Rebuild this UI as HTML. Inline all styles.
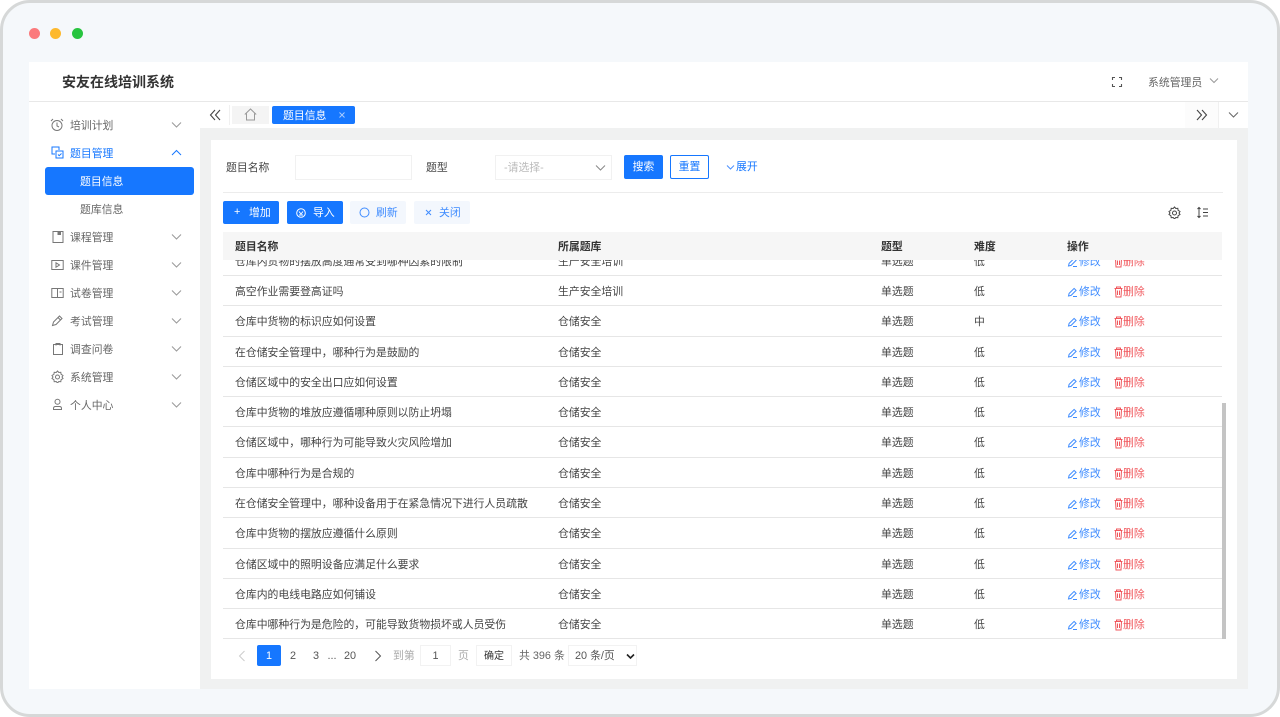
<!DOCTYPE html>
<html lang="zh"><head><meta charset="utf-8"><style>
html,body{margin:0;padding:0;width:1280px;height:717px;overflow:hidden;background:#fff}
body{font-family:"Liberation Sans","Noto Sans CJK SC",sans-serif;font-size:10.85px;color:#444;position:relative}
div,span,svg{position:absolute;box-sizing:border-box;white-space:nowrap}
#frame{left:0;top:0;width:1280px;height:717px;border:3px solid #d6d8d8;border-radius:30px;background:#f5f8fb}
.t{line-height:14px;height:14px}
.i{fill:none;stroke:#777;stroke-width:1}
.mt{left:70px;color:#666;margin-top:1px}
.r{left:223px;width:999px;border-bottom:1px solid #e6e6e6}
.r span{top:9px;line-height:14px}
.r svg{left:844px;top:9px;fill:none;stroke-width:1}
.c1{left:12px}.c2{left:335px}.c3{left:658px}.c4{left:751px}
.c5{left:856px;color:#3f8cff}.c6{left:900px;color:#f0575c}
.e{stroke:#3f8cff}.d{stroke:#f0575c}
.btn{height:23px;top:201px;border-radius:2px;text-align:center;line-height:23px}
.pg{top:645px;height:21px;line-height:22px;text-align:center;color:#555}
</style></head><body>
<div id="frame"></div>
<div style="left:29px;top:28px;width:11px;height:11px;border-radius:50%;background:#fb7a7c"></div>
<div style="left:50px;top:28px;width:11px;height:11px;border-radius:50%;background:#fdb92e"></div>
<div style="left:72px;top:28px;width:11px;height:11px;border-radius:50%;background:#27c43f"></div>

<div style="left:29px;top:62px;width:1219px;height:627px;background:#fff"></div>
<div style="left:29px;top:101px;width:1219px;height:1px;background:#e8e8e8"></div>
<div class="t" style="left:62px;top:74px;font-size:14px;line-height:17px;height:17px;font-weight:700;color:#333">安友在线培训系统</div>
<svg style="left:1111px;top:76px" width="12" height="12" viewBox="0 0 12 12"><path d="M1.500 4V1.500H4M8 1.500h2.500V4M10.500 8v2.500H8M4 10.500H1.500V8" fill="none" stroke="#555" stroke-width="1.100"/></svg>
<div class="t" style="left:1148px;top:76px;color:#666">系统管理员</div>
<svg style="left:1209px;top:77px" width="10" height="8" viewBox="0 0 10 8"><path d="M1 1.500l4 4 4-4" fill="none" stroke="#999"/></svg>

<!-- content bg -->
<div style="left:200px;top:102px;width:1048px;height:587px;background:#f0f1f1"></div>
<div style="left:200px;top:102px;width:1048px;height:26px;background:#fff"></div>
<div style="left:229px;top:105px;width:1px;height:20px;background:#f0f0f0"></div>
<svg style="left:209px;top:109px" width="12" height="12" viewBox="0 0 12 12"><path d="M6 1L1.500 6 6 11M11 1L6.500 6 11 11" fill="none" stroke="#444" stroke-width="1.100"/></svg>
<div style="left:232px;top:106px;width:37px;height:18px;background:#f4f4f4"></div>
<svg style="left:244px;top:108px" width="13" height="13" viewBox="0 0 13 13"><path d="M.8 6.500L6.500 1l5.700 5.500M2.500 5.500v6.500h8V5.500" fill="none" stroke="#999"/></svg>
<div style="left:272px;top:106px;width:83px;height:18px;background:#1677ff;border-radius:2px"></div>
<div class="t" style="left:283px;top:109px;color:#fff">题目信息</div>
<svg style="left:339px;top:112px" width="6" height="6" viewBox="0 0 6 6"><path d="M.5.5l5 5M5.500.5l-5 5" stroke="#a8ccff"/></svg>
<div style="left:1185px;top:102px;width:33px;height:26px;background:#fcfcfc"></div>
<div style="left:1218px;top:102px;width:1px;height:26px;background:#f0f0f0"></div>
<svg style="left:1196px;top:109px" width="12" height="12" viewBox="0 0 12 12"><path d="M1 1l4.500 5L1 11M6 1l4.500 5L6 11" fill="none" stroke="#444" stroke-width="1.100"/></svg>
<svg style="left:1228px;top:111px" width="11" height="8" viewBox="0 0 11 8"><path d="M1 1.500l4.500 4.500L10 1.500" fill="none" stroke="#666"/></svg>

<!-- sidebar -->
<svg class="i" style="left:50px;top:118px" width="14" height="14" viewBox="0 0 14 14"><circle cx="7" cy="7.500" r="5"/><path d="M7 4.500V8l2 1M1 3l2-2M13 3l-2-2"/></svg>
<div class="t mt" style="top:118px">培训计划</div>
<svg class="i" style="left:51px;top:146px;stroke:#1677ff" width="13" height="13" viewBox="0 0 13 13"><path d="M4 8H1V1h7v3"/><rect x="5" y="5" width="7" height="7"/><path d="M7 8.500l1.200 1.200L10.500 7.500"/></svg>
<div class="t mt" style="top:146px;color:#1677ff">题目管理</div>
<div style="left:45px;top:167px;width:149px;height:28px;background:#1677ff;border-radius:3px"></div>
<div class="t" style="left:80px;top:175px;color:#fff">题目信息</div>
<div class="t" style="left:80px;top:203px;color:#666">题库信息</div>
<svg class="i" style="left:52px;top:230px" width="12" height="14" viewBox="0 0 12 14"><rect x="1" y="1.500" width="10" height="11"/><path d="M6 2h2.500v2.500H6z" fill="#777"/></svg>
<div class="t mt" style="top:230px">课程管理</div>
<svg class="i" style="left:51px;top:259px" width="13" height="12" viewBox="0 0 13 12"><rect x=".8" y="1.500" width="11.400" height="9"/><path d="M5 3.800v4.400l3.500-2.200z"/></svg>
<div class="t mt" style="top:258px">课件管理</div>
<svg class="i" style="left:51px;top:287px" width="13" height="12" viewBox="0 0 13 12"><rect x=".8" y="1.500" width="11.400" height="9"/><path d="M6.500 1.500v9M8.500 5h2"/></svg>
<div class="t mt" style="top:286px">试卷管理</div>
<svg class="i" style="left:51px;top:314px" width="13" height="13" viewBox="0 0 13 13"><path d="M1.500 11.500l1-3.500 6-6 2.500 2.500-6 6zM7 3.500l2.500 2.500"/></svg>
<div class="t mt" style="top:314px">考试管理</div>
<svg class="i" style="left:52px;top:342px" width="12" height="14" viewBox="0 0 12 14"><rect x="1.500" y="2.500" width="9" height="10"/><path d="M4 3.500V1.500h4v2"/></svg>
<div class="t mt" style="top:342px">调查问卷</div>
<svg class="i" style="left:51px;top:370px" width="13" height="13" viewBox="0 0 13 13"><path d="M6.500 1l1.300 1.500 2-.2.300 2L12 5.500 11 7l1 1.500-1.900 1.200-.3 2-2-.2-1.300 1.500-1.300-1.500-2 .2-.3-2L1 8.500 2 7 1 5.500l1.900-1.200.3-2 2 .2z"/><circle cx="6.500" cy="7" r="2"/></svg>
<div class="t mt" style="top:370px">系统管理</div>
<svg class="i" style="left:51px;top:398px" width="13" height="13" viewBox="0 0 13 13"><circle cx="6.500" cy="3.800" r="2.500"/><path d="M2.500 11.500V10.500Q2.500 8.500 4.500 8.500H8.500Q10.500 8.500 10.500 10.500V11.500z"/></svg>
<div class="t mt" style="top:398px">个人中心</div>
<svg style="left:171px;top:121px" width="11" height="8" viewBox="0 0 11 8"><path d="M1 1.500l4.500 4.500L10 1.500" fill="none" stroke="#999"/></svg>
<svg style="left:171px;top:149px" width="11" height="8" viewBox="0 0 11 8"><path d="M1 6l4.500-4.500L10 6" fill="none" stroke="#1677ff"/></svg>
<svg style="left:171px;top:233px" width="11" height="8" viewBox="0 0 11 8"><path d="M1 1.500l4.500 4.500L10 1.500" fill="none" stroke="#999"/></svg>
<svg style="left:171px;top:261px" width="11" height="8" viewBox="0 0 11 8"><path d="M1 1.500l4.500 4.500L10 1.500" fill="none" stroke="#999"/></svg>
<svg style="left:171px;top:289px" width="11" height="8" viewBox="0 0 11 8"><path d="M1 1.500l4.500 4.500L10 1.500" fill="none" stroke="#999"/></svg>
<svg style="left:171px;top:317px" width="11" height="8" viewBox="0 0 11 8"><path d="M1 1.500l4.500 4.500L10 1.500" fill="none" stroke="#999"/></svg>
<svg style="left:171px;top:345px" width="11" height="8" viewBox="0 0 11 8"><path d="M1 1.500l4.500 4.500L10 1.500" fill="none" stroke="#999"/></svg>
<svg style="left:171px;top:373px" width="11" height="8" viewBox="0 0 11 8"><path d="M1 1.500l4.500 4.500L10 1.500" fill="none" stroke="#999"/></svg>
<svg style="left:171px;top:401px" width="11" height="8" viewBox="0 0 11 8"><path d="M1 1.500l4.500 4.500L10 1.500" fill="none" stroke="#999"/></svg>

<!-- card -->
<div style="left:211px;top:140px;width:1026px;height:539px;background:#fff"></div>
<div class="t" style="left:226px;top:161px">题目名称</div>
<div style="left:295px;top:155px;width:117px;height:25px;border:1px solid #f1f1f1"></div>
<div class="t" style="left:426px;top:161px">题型</div>
<div style="left:495px;top:155px;width:117px;height:25px;border:1px solid #f1f1f1"></div>
<div class="t" style="left:504px;top:161px;color:#bbb">-请选择-</div>
<svg style="left:595px;top:164px" width="11" height="8" viewBox="0 0 11 8"><path d="M1 1.500l4.500 4.500L10 1.500" fill="none" stroke="#888"/></svg>
<div style="left:624px;top:155px;width:39px;height:24px;background:#1677ff;border-radius:2px;color:#fff;text-align:center;line-height:25px">搜索</div>
<div style="left:670px;top:155px;width:39px;height:24px;border:1px solid #1677ff;border-radius:2px;color:#1677ff;text-align:center;line-height:23px">重置</div>
<svg style="left:726px;top:164px" width="9" height="7" viewBox="0 0 9 7"><path d="M1 1.500l3.500 3.500L8 1.500" fill="none" stroke="#4a90ff"/></svg>
<div class="t" style="left:736px;top:160px;color:#1677ff">展开</div>
<div style="left:223px;top:192px;width:1000px;height:1px;background:#ececec"></div>

<div class="btn" style="left:223px;width:56px;background:#1677ff"></div>
<div class="t" style="left:234px;top:205px;color:#fff">+</div>
<div class="t" style="left:249px;top:206px;color:#fff">增加</div>
<div class="btn" style="left:287px;width:56px;background:#1677ff"></div>
<svg style="left:296px;top:208px" width="10" height="10" viewBox="0 0 10 10"><circle cx="5" cy="5" r="4.300" fill="none" stroke="#fff"/><path d="M3 3.500l2 2.500 2-2.500M3 7h4" fill="none" stroke="#fff"/></svg>
<div class="t" style="left:313px;top:206px;color:#fff">导入</div>
<div class="btn" style="left:350px;width:56px;background:#f3f7fd"></div>
<svg style="left:359px;top:207px" width="11" height="11" viewBox="0 0 11 11"><circle cx="5.500" cy="5.500" r="4.500" fill="none" stroke="#3f8cff"/></svg>
<div class="t" style="left:376px;top:206px;color:#3f8cff">刷新</div>
<div class="btn" style="left:414px;width:56px;background:#f3f7fd"></div>
<svg style="left:425px;top:209px" width="7" height="7" viewBox="0 0 7 7"><path d="M1 1l5 5M6 1L1 6" stroke="#3f8cff"/></svg>
<div class="t" style="left:439px;top:206px;color:#3f8cff">关闭</div>
<svg class="i" style="left:1168px;top:206px;stroke:#444" width="13" height="13" viewBox="0 0 13 13"><path d="M6.500 1l1.300 1.500 2-.2.300 2L12 5.500 11 7l1 1.500-1.900 1.200-.3 2-2-.2-1.300 1.500-1.300-1.500-2 .2-.3-2L1 8.500 2 7 1 5.500l1.900-1.200.3-2 2 .2z"/><circle cx="6.500" cy="7" r="2"/></svg>
<svg class="i" style="left:1196px;top:206px;stroke:#444" width="13" height="13" viewBox="0 0 13 13"><path d="M3 1.500v10M1.500 3L3 1.500 4.500 3M1.500 10L3 11.500 4.500 10M7 3h5M7 6.500h5M7 10h5"/></svg>

<!-- table rows -->
<div class="r" style="top:245px;height:31px"><span class="c1" style="top:10px">仓库内货物的摆放高度通常受到哪种因素的限制</span><span class="c2" style="top:10px">生产安全培训</span><span class="c3" style="top:10px">单选题</span><span class="c4" style="top:10px">低</span><span class="c5" style="top:10px">修改</span><span class="c6" style="top:10px">删除</span><svg style="top:10px" width="60" height="14" viewBox="0 0 60 14"><path class="e" d="M1.500 11l.6-2.600 5-5 2 2-5 5zM6 11.500h4"/><path class="d" d="M47.500 3.500h8M49.500 3.500V2h4v1.500M48.500 3.500l.5 8.500h5l.5-8.500M50.500 5.500v4.500M52.500 5.500v4.500"/></svg></div>
<div class="r" style="top:276px;height:30px"><span class="c1">高空作业需要登高证吗</span><span class="c2">生产安全培训</span><span class="c3">单选题</span><span class="c4">低</span><span class="c5">修改</span><span class="c6">删除</span><svg width="60" height="14" viewBox="0 0 60 14"><path class="e" d="M1.500 11l.6-2.600 5-5 2 2-5 5zM6 11.500h4"/><path class="d" d="M47.500 3.500h8M49.500 3.500V2h4v1.500M48.500 3.500l.5 8.500h5l.5-8.500M50.500 5.500v4.500M52.500 5.500v4.500"/></svg></div>
<div class="r" style="top:306px;height:31px"><span class="c1">仓库中货物的标识应如何设置</span><span class="c2">仓储安全</span><span class="c3">单选题</span><span class="c4">中</span><span class="c5">修改</span><span class="c6">删除</span><svg width="60" height="14" viewBox="0 0 60 14"><path class="e" d="M1.500 11l.6-2.600 5-5 2 2-5 5zM6 11.500h4"/><path class="d" d="M47.500 3.500h8M49.500 3.500V2h4v1.500M48.500 3.500l.5 8.500h5l.5-8.500M50.500 5.500v4.500M52.500 5.500v4.500"/></svg></div>
<div class="r" style="top:337px;height:30px"><span class="c1">在仓储安全管理中，哪种行为是鼓励的</span><span class="c2">仓储安全</span><span class="c3">单选题</span><span class="c4">低</span><span class="c5">修改</span><span class="c6">删除</span><svg width="60" height="14" viewBox="0 0 60 14"><path class="e" d="M1.500 11l.6-2.600 5-5 2 2-5 5zM6 11.500h4"/><path class="d" d="M47.500 3.500h8M49.500 3.500V2h4v1.500M48.500 3.500l.5 8.500h5l.5-8.500M50.500 5.500v4.500M52.500 5.500v4.500"/></svg></div>
<div class="r" style="top:367px;height:30px"><span class="c1">仓储区域中的安全出口应如何设置</span><span class="c2">仓储安全</span><span class="c3">单选题</span><span class="c4">低</span><span class="c5">修改</span><span class="c6">删除</span><svg width="60" height="14" viewBox="0 0 60 14"><path class="e" d="M1.500 11l.6-2.600 5-5 2 2-5 5zM6 11.500h4"/><path class="d" d="M47.500 3.500h8M49.500 3.500V2h4v1.500M48.500 3.500l.5 8.500h5l.5-8.500M50.500 5.500v4.500M52.500 5.500v4.500"/></svg></div>
<div class="r" style="top:397px;height:30px"><span class="c1">仓库中货物的堆放应遵循哪种原则以防止坍塌</span><span class="c2">仓储安全</span><span class="c3">单选题</span><span class="c4">低</span><span class="c5">修改</span><span class="c6">删除</span><svg width="60" height="14" viewBox="0 0 60 14"><path class="e" d="M1.500 11l.6-2.600 5-5 2 2-5 5zM6 11.500h4"/><path class="d" d="M47.500 3.500h8M49.500 3.500V2h4v1.500M48.500 3.500l.5 8.500h5l.5-8.500M50.500 5.500v4.500M52.500 5.500v4.500"/></svg></div>
<div class="r" style="top:427px;height:31px"><span class="c1">仓储区域中，哪种行为可能导致火灾风险增加</span><span class="c2">仓储安全</span><span class="c3">单选题</span><span class="c4">低</span><span class="c5">修改</span><span class="c6">删除</span><svg width="60" height="14" viewBox="0 0 60 14"><path class="e" d="M1.500 11l.6-2.600 5-5 2 2-5 5zM6 11.500h4"/><path class="d" d="M47.500 3.500h8M49.500 3.500V2h4v1.500M48.500 3.500l.5 8.500h5l.5-8.500M50.500 5.500v4.500M52.500 5.500v4.500"/></svg></div>
<div class="r" style="top:458px;height:30px"><span class="c1">仓库中哪种行为是合规的</span><span class="c2">仓储安全</span><span class="c3">单选题</span><span class="c4">低</span><span class="c5">修改</span><span class="c6">删除</span><svg width="60" height="14" viewBox="0 0 60 14"><path class="e" d="M1.500 11l.6-2.600 5-5 2 2-5 5zM6 11.500h4"/><path class="d" d="M47.500 3.500h8M49.500 3.500V2h4v1.500M48.500 3.500l.5 8.500h5l.5-8.500M50.500 5.500v4.500M52.500 5.500v4.500"/></svg></div>
<div class="r" style="top:488px;height:30px"><span class="c1">在仓储安全管理中，哪种设备用于在紧急情况下进行人员疏散</span><span class="c2">仓储安全</span><span class="c3">单选题</span><span class="c4">低</span><span class="c5">修改</span><span class="c6">删除</span><svg width="60" height="14" viewBox="0 0 60 14"><path class="e" d="M1.500 11l.6-2.600 5-5 2 2-5 5zM6 11.500h4"/><path class="d" d="M47.500 3.500h8M49.500 3.500V2h4v1.500M48.500 3.500l.5 8.500h5l.5-8.500M50.500 5.500v4.500M52.500 5.500v4.500"/></svg></div>
<div class="r" style="top:518px;height:31px"><span class="c1">仓库中货物的摆放应遵循什么原则</span><span class="c2">仓储安全</span><span class="c3">单选题</span><span class="c4">低</span><span class="c5">修改</span><span class="c6">删除</span><svg width="60" height="14" viewBox="0 0 60 14"><path class="e" d="M1.500 11l.6-2.600 5-5 2 2-5 5zM6 11.500h4"/><path class="d" d="M47.500 3.500h8M49.500 3.500V2h4v1.500M48.500 3.500l.5 8.500h5l.5-8.500M50.500 5.500v4.500M52.500 5.500v4.500"/></svg></div>
<div class="r" style="top:549px;height:30px"><span class="c1">仓储区域中的照明设备应满足什么要求</span><span class="c2">仓储安全</span><span class="c3">单选题</span><span class="c4">低</span><span class="c5">修改</span><span class="c6">删除</span><svg width="60" height="14" viewBox="0 0 60 14"><path class="e" d="M1.500 11l.6-2.600 5-5 2 2-5 5zM6 11.500h4"/><path class="d" d="M47.500 3.500h8M49.500 3.500V2h4v1.500M48.500 3.500l.5 8.500h5l.5-8.500M50.500 5.500v4.500M52.500 5.500v4.500"/></svg></div>
<div class="r" style="top:579px;height:30px"><span class="c1">仓库内的电线电路应如何铺设</span><span class="c2">仓储安全</span><span class="c3">单选题</span><span class="c4">低</span><span class="c5">修改</span><span class="c6">删除</span><svg width="60" height="14" viewBox="0 0 60 14"><path class="e" d="M1.500 11l.6-2.600 5-5 2 2-5 5zM6 11.500h4"/><path class="d" d="M47.500 3.500h8M49.500 3.500V2h4v1.500M48.500 3.500l.5 8.500h5l.5-8.500M50.500 5.500v4.500M52.500 5.500v4.500"/></svg></div>
<div class="r" style="top:609px;height:30px"><span class="c1">仓库中哪种行为是危险的，可能导致货物损坏或人员受伤</span><span class="c2">仓储安全</span><span class="c3">单选题</span><span class="c4">低</span><span class="c5">修改</span><span class="c6">删除</span><svg width="60" height="14" viewBox="0 0 60 14"><path class="e" d="M1.500 11l.6-2.600 5-5 2 2-5 5zM6 11.500h4"/><path class="d" d="M47.500 3.500h8M49.500 3.500V2h4v1.500M48.500 3.500l.5 8.500h5l.5-8.500M50.500 5.500v4.500M52.500 5.500v4.500"/></svg></div>

<div style="left:223px;top:232px;width:999px;height:28px;background:#f6f6f6"></div>
<div class="t" style="left:235px;top:240px;font-weight:700;color:#333">题目名称</div>
<div class="t" style="left:558px;top:240px;font-weight:700;color:#333">所属题库</div>
<div class="t" style="left:881px;top:240px;font-weight:700;color:#333">题型</div>
<div class="t" style="left:974px;top:240px;font-weight:700;color:#333">难度</div>
<div class="t" style="left:1067px;top:240px;font-weight:700;color:#333">操作</div>
<div style="left:1222px;top:403px;width:4px;height:236px;background:#c4c4c4"></div>

<!-- pagination -->
<svg style="left:238px;top:650px" width="8" height="12" viewBox="0 0 8 12"><path d="M6.500 1L1.500 6l5 5" fill="none" stroke="#ccc"/></svg>
<div class="pg" style="left:257px;width:24px;background:#1677ff;color:#fff;border-radius:2px;line-height:22px">1</div>
<div class="pg" style="left:281px;width:24px">2</div>
<div class="pg" style="left:304px;width:24px">3</div>
<div class="pg" style="left:326px;width:12px">...</div>
<div class="pg" style="left:338px;width:24px">20</div>
<svg style="left:374px;top:650px" width="8" height="12" viewBox="0 0 8 12"><path d="M1.500 1l5 5-5 5" fill="none" stroke="#555"/></svg>
<div class="pg" style="left:393px;color:#aaa">到第</div>
<div class="pg" style="left:420px;width:31px;border:1px solid #f2f2f2;line-height:20px">1</div>
<div class="pg" style="left:458px;color:#aaa">页</div>
<div class="pg" style="left:476px;width:36px;border:1px solid #f2f2f2;line-height:21px;color:#333;font-size:10px">确定</div>
<div class="pg" style="left:519px;color:#666">共 396 条</div>
<div class="pg" style="left:568px;width:69px;border:1px solid #f2f2f2;text-align:left;padding-left:6px;line-height:20px">20 条/页</div>
<svg style="left:626px;top:653px" width="9" height="7" viewBox="0 0 9 7"><path d="M1 1.500l3.500 3.500L8 1.500" fill="none" stroke="#222" stroke-width="1.600"/></svg>
</body></html>
